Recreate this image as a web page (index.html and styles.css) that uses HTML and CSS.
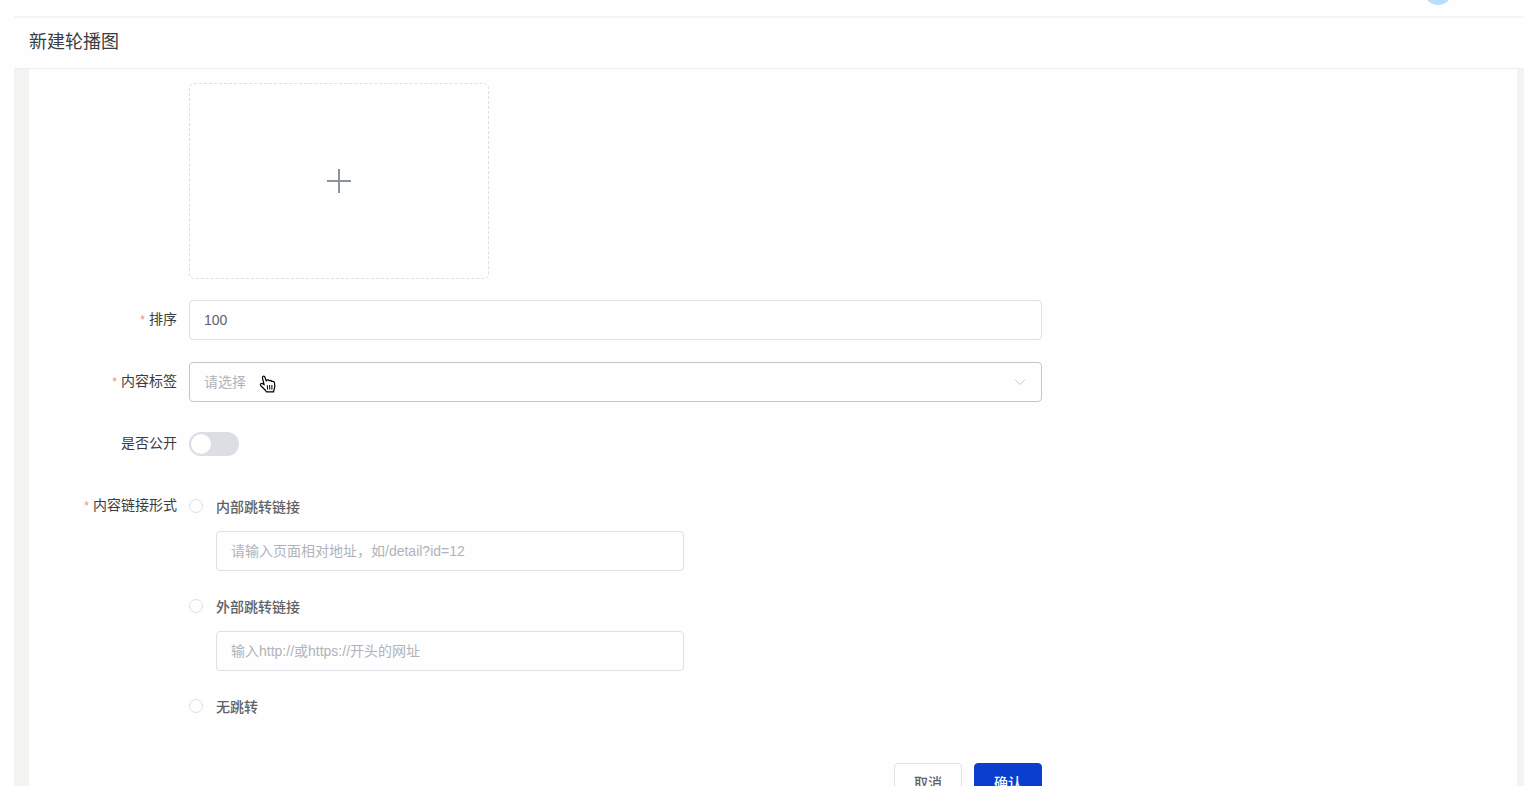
FILE: index.html
```html
<!DOCTYPE html>
<html lang="zh-CN">
<head>
    <meta charset="UTF-8">
    <meta name="viewport" content="width=device-width, initial-scale=1.0">
    <title>新建轮播图</title>
    <link rel="stylesheet" href="styles.css">
</head>
<body>
    <div class="topbar">
        <span class="avatar"></span>
    </div>

    <header class="page-header">
        <h1>新建轮播图</h1>
    </header>

    <main class="page-body">
        <form class="banner-form">
            <div class="form-item">
                <span class="form-label"></span>
                <button type="button" class="upload" aria-label="上传图片">
                    <svg width="24" height="24" viewBox="0 0 24 24" fill="none" stroke="#8c939d" stroke-width="2">
                        <path d="M12 0v24M0 12h24"/>
                    </svg>
                </button>
            </div>

            <div class="form-item">
                <label class="form-label required" for="sort">排序</label>
                <input type="text" class="input" id="sort" value="100">
            </div>

            <div class="form-item">
                <label class="form-label required" for="tag">内容标签</label>
                <div class="select">
                    <select class="input" id="tag">
                        <option value="">请选择</option>
                    </select>
                    <svg class="arrow" width="12" height="12" viewBox="0 0 12 12" fill="none" stroke="#c0c4cc">
                        <path d="M1 3.5l5 5 5-5"/>
                    </svg>
                    <svg class="pointer" width="18" height="18" viewBox="0 0 18 18" fill="#fff" stroke="#000" stroke-width="1.2" stroke-linejoin="round" stroke-linecap="round">
                        <path d="M5.2 9.800L3.500 3.200C3 1.200 5.200.4 5.900 2.200L7.300 6C7.600 4.600 9.500 4.500 10 5.800C10.800 4.900 12.300 5.200 12.600 6.500C13.900 5.900 15.300 6.600 15.500 8.200L15.800 11C16 13 14.700 14.200 14.600 16.900H7.400C6.800 15 3.600 12.700 1.700 10.600C.7 9.200 2.300 7.700 3.800 8.700z"/>
                        <path d="M8.300 10.600l.3 3.600M10.600 10.500l.2 3.700M12.900 10.400v3.800" stroke-width="1"/>
                    </svg>
                </div>
            </div>

            <div class="form-item">
                <label class="form-label" for="public">是否公开</label>
                <input type="checkbox" class="switch" id="public" role="switch">
            </div>

            <div class="form-item">
                <span class="form-label required" id="link-type">内容链接形式</span>
                <div class="radio-group" role="radiogroup" aria-labelledby="link-type">
                    <label class="radio"><input type="radio" name="link"><span>内部跳转链接</span></label>
                    <input type="text" class="input link-input" aria-label="内部跳转链接" placeholder="请输入页面相对地址，如/detail?id=12">
                    <label class="radio"><input type="radio" name="link"><span>外部跳转链接</span></label>
                    <input type="text" class="input link-input" aria-label="外部跳转链接" placeholder="输入http://或https://开头的网址">
                    <label class="radio"><input type="radio" name="link"><span>无跳转</span></label>
                </div>
            </div>

            <div class="form-actions">
                <button type="button" class="btn">取消</button>
                <button type="submit" class="btn btn-primary">确认</button>
            </div>
        </form>
    </main>
</body>
</html>
```

FILE: styles.css
```css
* {
    box-sizing: border-box;
}
body {
    margin: 0;
    height: 100vh;
    padding-left: 14px;
    display: flex;
    flex-direction: column;
    overflow: hidden;
    background: #fefefe;
    color: #3c3d40;
    font-family: "Liberation Sans", "Noto Sans CJK SC", sans-serif;
    font-size: 14px;
}
input, select, button {
    font: inherit;
}

/* header */
.topbar {
    display: flex;
    flex: none;
    justify-content: flex-end;
    align-items: flex-end;
    height: 16px;
    padding: 0 72px 11px 0;
}
.avatar {
    flex: none;
    width: 28px;
    height: 28px;
    border-radius: 50%;
    background: #b9defd;
}
.page-header {
    flex: none;
    height: 53px;
    padding: 0 15px;
    border-top: 2px solid #f5f5f5;
    border-bottom: 1px solid #eeeeef;
}
.page-header h1 {
    margin: 0;
    font-size: 18px;
    font-weight: 400;
    line-height: 48px;
}

/* form */
.page-body {
    flex: 1;
    min-height: 0;
    border: solid #f3f3f1;
    border-width: 0 7px 0 15px;
}
.banner-form {
    max-width: 1013px;
    padding-top: 14px;
}
.form-item {
    display: flex;
    margin-bottom: 22px;
}
.form-label {
    flex: none;
    width: 160px;
    padding-right: 12px;
    line-height: 38px;
    text-align: right;
}
.required::before {
    content: "*";
    margin-right: 4px;
    color: #f78989;
    font-size: 12px;
}
.upload {
    display: flex;
    align-items: center;
    justify-content: center;
    width: 300px;
    height: 196px;
    margin-bottom: -1px;
    padding: 0;
    border: 1px dashed #dcdfe6;
    border-radius: 5px;
    background: transparent;
}
.input {
    width: 100%;
    height: 40px;
    padding: 0 14px;
    border: 1px solid #dfe0e6;
    border-radius: 4px;
    background: #fefefe;
    color: #606266;
}
.input::placeholder {
    color: #b0b3ba;
    opacity: 1;
}
.select {
    position: relative;
    flex: 1;
}
.select .input {
    display: block;
    appearance: none;
    border-color: #c4c6cd;
    color: #b0b3ba;
}
.arrow {
    position: absolute;
    top: 14px;
    right: 16px;
    pointer-events: none;
}
.pointer {
    position: absolute;
    top: 13px;
    left: 70px;
    pointer-events: none;
}
.switch {
    appearance: none;
    width: 50px;
    height: 24px;
    margin: 8px 0;
    padding: 2px;
    border-radius: 12px;
    background: #dcdde5;
}
.switch::before {
    content: "";
    display: block;
    width: 20px;
    height: 20px;
    border-radius: 50%;
    background: #fefefe;
}
.switch:checked {
    background: #0a3ecf;
}
.switch:checked::before {
    margin-left: auto;
}
.radio-group {
    flex: 1;
}
.radio {
    display: flex;
    align-items: center;
    gap: 13px;
    height: 40px;
    color: #606266;
    font-weight: 500;
}
.radio input {
    appearance: none;
    width: 14px;
    height: 14px;
    margin: 0;
    border: 1px solid #dcdfe6;
    border-radius: 50%;
}
.radio input:checked {
    border: 4px solid #0a3ecf;
}
.link-input {
    display: block;
    width: 468px;
    margin: 5px 0 15px 27px;
}
.form-actions {
    display: flex;
    justify-content: flex-end;
    gap: 12px;
    padding-top: 15px;
}
.btn {
    width: 68px;
    height: 40px;
    padding: 0 0 2px;
    border: 1px solid #dfe0e6;
    border-radius: 4px;
    background: #fefefe;
    color: #606266;
    font-weight: 500;
}
.btn-primary {
    border-color: #0a3ecf;
    background: #0a3ecf;
    color: #fff;
}
```
